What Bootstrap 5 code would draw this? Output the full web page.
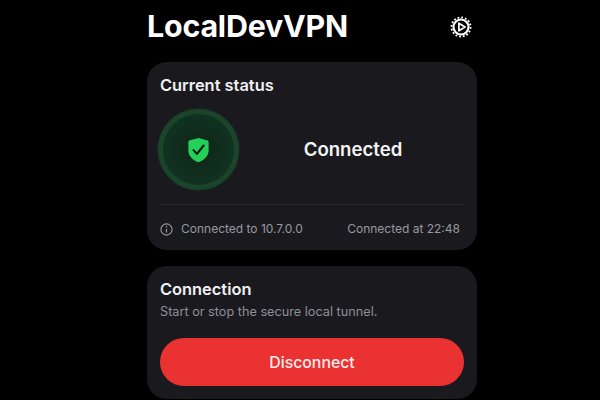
<!DOCTYPE html>
<html lang="en">
<head>
<meta charset="utf-8">
<title>LocalDevVPN</title>
<link href="https://cdn.jsdelivr.net/npm/bootstrap@5.3.0/dist/css/bootstrap.min.css" rel="stylesheet">
<style>
html,body{height:400px;overflow:hidden;background:#000;}
body{font-family:Inter,"Liberation Sans",sans-serif;color:#f2f2f4;}
.vpn-shell{width:330px;margin-left:147px;}
.vpn-head{height:62px;padding-bottom:9px;padding-right:5px;}
.vpn-title{font-size:30.4px;font-weight:700;letter-spacing:-.2px;line-height:1;margin:0;color:#fff;}
.vpn-panel{background:#1a1a1e;border-radius:20px;padding:14px 13px;}
.vpn-status{height:188px;margin-bottom:16px;}
.vpn-conn{height:133px;}
.vpn-h{font-size:16.4px;font-weight:600;line-height:19px;margin:0;color:#f0f0f2;}
.vpn-row{margin-top:14px;}
.vpn-ring{width:81px;height:81px;border-radius:50%;background:radial-gradient(circle,#0f2417 0%,#103020 60%,#123822 100%);border:5px solid #1b452b;box-shadow:0 0 2px #1b452b;margin-left:-2px;flex:none;}
.vpn-state{font-size:18.6px;font-weight:600;color:#f4f4f5;margin-left:3px;}
.vpn-rule{border-top:1px solid #29292d;margin-top:14px;padding-top:15px;font-size:12px;color:#98989e;padding-right:4px;}
.vpn-sub{font-size:12.7px;color:#8f8f95;margin:5px 0 18px;line-height:16px;}
.vpn-btn{width:304px;height:48px;border-radius:24px;background:#ea3232;border:0;color:#f8eeee;font-size:15.8px;font-weight:500;padding-top:8px;}
.vpn-btn:hover{background:#ea3232;color:#f8eeee;}
</style>
</head>
<body>
<div class="vpn-shell">
  <header class="vpn-head d-flex justify-content-between align-items-center">
    <h1 class="vpn-title">LocalDevVPN</h1>
    <svg width="22" height="22" viewBox="0 0 24 24" aria-label="Settings">
      <circle cx="12" cy="12" r="8.2" fill="none" stroke="#fff" stroke-width="2.3"/>
      <circle cx="12" cy="12" r="10.4" fill="none" stroke="#fff" stroke-width="2" stroke-dasharray="2 2.08"/>
      <path d="M9.7 7.8 16.4 12 9.7 16.2Z" fill="none" stroke="#fff" stroke-width="1.9" stroke-linejoin="round"/>
    </svg>
  </header>

  <section class="vpn-panel vpn-status d-flex flex-column">
    <h2 class="vpn-h">Current status</h2>
    <div class="vpn-row d-flex align-items-center">
      <div class="vpn-ring d-flex align-items-center justify-content-center">
        <svg width="21" height="26" viewBox="0 0 22 27">
          <path d="M11 .8 20.6 3.6C21.3 3.8 21.6 4.3 21.6 5V14C21.6 20 16.5 24.2 11 26.4 5.5 24.2.4 20 .4 14V5C.4 4.3.7 3.8 1.4 3.6Z" fill="#25d058"/>
          <path d="M5.8 13.6 9.4 17.6 16.4 8.8" fill="none" stroke="#0c1a12" stroke-width="2.2" stroke-linecap="round" stroke-linejoin="round"/>
        </svg>
      </div>
      <div class="vpn-state flex-grow-1 text-center">Connected</div>
    </div>
    <div class="vpn-rule d-flex justify-content-between align-items-center">
      <span class="d-flex align-items-center gap-2">
        <svg width="13" height="13" viewBox="0 0 13 13">
          <circle cx="6.5" cy="6.5" r="5.6" fill="none" stroke="#98989e" stroke-width="1.1"/>
          <path d="M6.5 5.8V9.6" stroke="#98989e" stroke-width="1.2"/>
          <circle cx="6.5" cy="3.8" r=".8" fill="#98989e"/>
        </svg>
        Connected to 10.7.0.0
      </span>
      <span>Connected at 22:48</span>
    </div>
  </section>

  <section class="vpn-panel vpn-conn">
    <h2 class="vpn-h">Connection</h2>
    <p class="vpn-sub">Start or stop the secure local tunnel.</p>
    <button type="button" class="btn vpn-btn d-block">Disconnect</button>
  </section>
</div>
<script src="https://cdn.jsdelivr.net/npm/bootstrap@5.3.0/dist/js/bootstrap.bundle.min.js"></script>
</body>
</html>
